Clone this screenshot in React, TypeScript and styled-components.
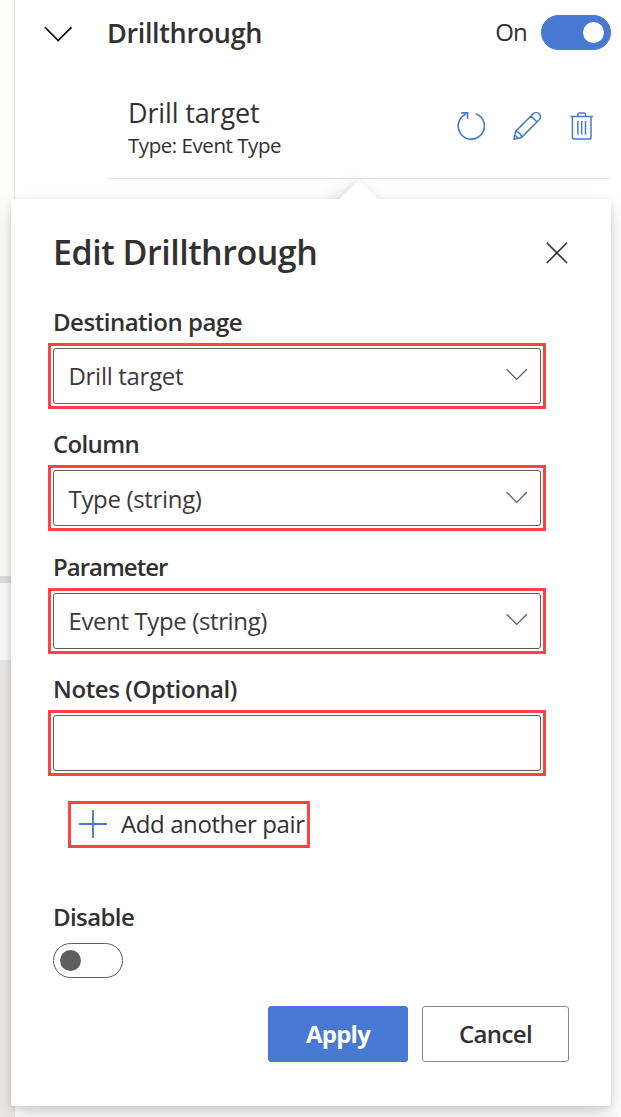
import React from "react";
import styled, { createGlobalStyle } from "styled-components";

const BLUE = "#4878d2";
const RED = "#ff4343";
const INK = "#323130";

const GlobalStyle = createGlobalStyle`
  *, *::before, *::after { box-sizing: border-box; }
  body {
    margin: 0;
    background: #fff;
    color: ${INK};
    font-family: "Open Sans", "Noto Sans", sans-serif;
    overflow: hidden;
  }
  button { font: inherit; color: inherit; }
  svg { display: block; flex: none; }
`;

const Page = styled.div`
  position: relative;
  display: flex;
  width: 621px;
  height: 1117px;
  overflow: hidden;
`;

const Rail = styled.div`
  display: flex;
  flex-direction: column;
  flex: none;
  width: 15px;
  border-right: 1px solid #e6e6e6;
`;

const RailPart = styled.div<{ $height?: number; $color: string }>`
  flex: ${(p) => (p.$height ? `0 0 ${p.$height}px` : "1")};
  background: ${(p) => p.$color};
`;

const Pane = styled.main`
  flex: 1;
  padding: 15px 10px 0 29px;
  background: #fff;
`;

const PaneHeader = styled.header`
  display: flex;
  align-items: center;
  height: 35px;
`;

const Label = styled.span<{
  $size: number;
  $line: number;
  $weight?: number;
  $track?: number;
  $color?: string;
}>`
  display: block;
  white-space: nowrap;
  font-size: ${(p) => p.$size}px;
  line-height: ${(p) => p.$line}px;
  font-weight: ${(p) => p.$weight ?? 400};
  letter-spacing: ${(p) => p.$track ?? 0}px;
  color: ${(p) => p.$color ?? INK};
`;

const HeaderTitle = styled.div`
  flex: 1;
  padding-left: 35px;
`;

const Toggle = styled.button<{ $on?: boolean }>`
  display: flex;
  align-items: center;
  justify-content: ${(p) => (p.$on ? "flex-end" : "flex-start")};
  width: 70px;
  height: 35px;
  padding: 0 6px;
  border: 1px solid ${(p) => (p.$on ? BLUE : "#605e5c")};
  border-radius: 18px;
  background: ${(p) => (p.$on ? BLUE : "#fff")};
`;

const Knob = styled.span<{ $color: string }>`
  width: 21px;
  height: 21px;
  border-radius: 50%;
  background: ${(p) => p.$color};
`;

const OnGroup = styled.div`
  display: flex;
  align-items: flex-start;
  gap: 14px;
`;

const TargetRow = styled.section`
  display: flex;
  justify-content: space-between;
  height: 84px;
  margin: 45px 0 0 63px;
  padding: 0 14px 0 21px;
  border-bottom: 1px solid #e8e8e8;
`;

const Actions = styled.div`
  display: flex;
  align-items: flex-start;
  gap: 28px;
  padding-top: 17px;
`;

const Callout = styled.div`
  position: absolute;
  left: 11px;
  top: 199px;
  width: 600px;
  height: 907px;
`;

const Beak = styled.div`
  position: absolute;
  left: 334px;
  top: -14px;
  width: 28px;
  height: 28px;
  background: #fff;
  transform: rotate(45deg);
  box-shadow: 0 11px 25px rgba(0, 0, 0, 0.14), 0 2px 6px rgba(0, 0, 0, 0.11);
`;

const Card = styled.div`
  position: relative;
  display: flex;
  flex-direction: column;
  height: 100%;
  padding: 28px 42px 44px 42px;
  border-radius: 3px;
  background: #fff;
`;

const CardShadow = styled.div`
  position: absolute;
  inset: 0;
  border-radius: 3px;
  box-shadow: 0 11px 25px rgba(0, 0, 0, 0.14), 0 2px 6px rgba(0, 0, 0, 0.11);
`;

const CardHeader = styled.div`
  display: flex;
  align-items: center;
  justify-content: space-between;
  height: 50px;
  padding-right: 1px;

  svg { margin-top: 2px; }
`;

const Fields = styled.div`
  display: flex;
  flex-direction: column;
  gap: 19.5px;
  padding-top: 28.7px;
`;

const Highlight = styled.div`
  width: 498px;
  height: 66px;
  margin: 5px 0 0 -5px;
  padding: 2px;
  border: 3px solid ${RED};
`;

const Box = styled.div`
  display: flex;
  align-items: center;
  justify-content: space-between;
  height: 56px;
  padding: 0.8px 12px 0 14.5px;
  border: 1px solid #605e5c;
  border-radius: 3px;
`;

const AddPair = styled.button`
  display: flex;
  align-items: center;
  gap: 14px;
  width: 242px;
  height: 47px;
  margin: 24.8px 0 0 15px;
  padding: 0 0 0 8px;
  border: 3px solid ${RED};
  background: #fff;
`;

const DisableGroup = styled.div`
  display: flex;
  flex-direction: column;
  gap: 10px;
  padding-top: 53px;
`;

const Footer = styled.div`
  display: flex;
  justify-content: flex-end;
  gap: 14px;
  margin-top: auto;
`;

const Button = styled.button<{ $primary?: boolean }>`
  display: flex;
  align-items: center;
  justify-content: center;
  width: ${(p) => (p.$primary ? 140 : 147)}px;
  height: 56px;
  padding: 0;
  border: 1px solid ${(p) => (p.$primary ? BLUE : "#8a8886")};
  border-radius: 3px;
  background: ${(p) => (p.$primary ? BLUE : "#fff")};
`;

const SectionChevron = () => (
  <svg width="28" height="28" viewBox="0 0 28 28" fill="none" stroke="#111" strokeWidth="1.7">
    <path d="M0.9 8.2 14.2 21.5 27.5 8.2" />
  </svg>
);

const SelectChevron = () => (
  <svg width="22" height="22" viewBox="0 0 22 22" fill="none" stroke="#605e5c" strokeWidth="1.3">
    <path d="M0.6 4.2 10.7 14.4 20.8 4.2" />
  </svg>
);

const CloseIcon = () => (
  <svg width="22" height="22" viewBox="0 0 22 22" fill="none" stroke={INK} strokeWidth="1.6">
    <path d="M0.8 0.8 21 21M21 0.8 0.8 21" />
  </svg>
);

const PlusIcon = () => (
  <svg width="28" height="28" viewBox="0 0 28 28" fill="none" stroke={BLUE} strokeWidth="1.8">
    <path d="M0 14H28M14 0V28" />
  </svg>
);

const RefreshIcon = () => (
  <svg width="28" height="28" viewBox="-0.7 0 28 28" fill="none" stroke={BLUE} strokeWidth="1.6">
    <path d="M18 1.7A13.1 13.1 0 1 1 8.2 2.1M3.6 0.9H9.9V7" />
  </svg>
);

const PencilIcon = () => (
  <svg width="28" height="28" viewBox="0 0 28 28" fill="none" stroke={BLUE} strokeWidth="1.5" strokeLinejoin="round">
    <path d="M0.8 27.2 2.6 19.4 20.2 1.8A3.9 3.9 0 0 1 26.2 7.8L8.6 25.4ZM18 4 24 10M2.6 19.4C5.4 19.6 8.4 22.4 8.6 25.4M1.7 23.6C3 23.8 4.3 25.2 4.5 26.4" />
  </svg>
);

const TrashIcon = () => (
  <svg width="28" height="28" viewBox="0 0 28 28" fill="none" stroke={BLUE} strokeWidth="1.5">
    <path d="M1.4 4.5H24M8.9 4.5V2.3Q8.9 0.9 10.3 0.9H15.1Q16.5 0.9 16.5 2.3V4.5M3.4 4.5V25.3Q3.4 27.1 5.2 27.1H20.2Q22 27.1 22 25.3V4.5M8.9 9V22.6M12.7 9V22.6M16.5 9V22.6" />
  </svg>
);

type FieldData = { label: string; labelTrack: number; value?: string; valueTrack?: number };

const FIELDS: FieldData[] = [
  { label: "Destination page", labelTrack: -0.48, value: "Drill target", valueTrack: -0.3 },
  { label: "Column", labelTrack: -0.65, value: "Type (string)", valueTrack: -0.33 },
  { label: "Parameter", labelTrack: -1, value: "Event Type (string)", valueTrack: -0.38 },
  { label: "Notes (Optional)", labelTrack: -0.4 },
];

const Field = ({ label, labelTrack, value, valueTrack }: FieldData) => (
  <div>
    <Label $size={24} $line={32} $weight={600} $track={labelTrack}>{label}</Label>
    <Highlight>
      <Box>
        {value && (
          <>
            <Label $size={24} $line={54} $track={valueTrack} $color="#3b3a39">{value}</Label>
            <SelectChevron />
          </>
        )}
      </Box>
    </Highlight>
  </div>
);

export default function App() {
  return (
    <>
      <GlobalStyle />
      <Page>
        <Rail>
          <RailPart $height={576} $color="#fdfdfb" />
          <RailPart $height={7} $color="#e1dfdd" />
          <RailPart $height={77} $color="#fbfbfb" />
          <RailPart $color="#edebe9" />
        </Rail>
        <Pane>
          <PaneHeader>
            <SectionChevron />
            <HeaderTitle>
              <Label $size={27} $line={35} $weight={600} $track={-0.35}>Drillthrough</Label>
            </HeaderTitle>
            <OnGroup>
              <Label $size={24} $line={33} $track={-0.8}>On</Label>
              <Toggle $on aria-label="Drillthrough">
                <Knob $color="#fff" />
              </Toggle>
            </OnGroup>
          </PaneHeader>
          <TargetRow>
            <div>
              <Label $size={27} $line={36} $track={-0.15}>Drill target</Label>
              <Label $size={20.5} $line={28} $track={-0.45}>Type: Event Type</Label>
            </div>
            <Actions>
              <RefreshIcon />
              <PencilIcon />
              <TrashIcon />
            </Actions>
          </TargetRow>
        </Pane>

        <Callout>
          <CardShadow />
          <Beak />
          <Card>
            <CardHeader>
              <Label $size={34} $line={50} $weight={600} $track={-0.48}>Edit Drillthrough</Label>
              <CloseIcon />
            </CardHeader>
            <Fields>
              {FIELDS.map((f) => (
                <Field key={f.label} {...f} />
              ))}
            </Fields>
            <AddPair>
              <PlusIcon />
              <Label $size={24} $line={40} $track={-0.4}>Add another pair</Label>
            </AddPair>
            <DisableGroup>
              <Label $size={24} $line={32} $weight={600} $track={-0.6}>Disable</Label>
              <Toggle aria-label="Disable">
                <Knob $color="#605e5c" />
              </Toggle>
            </DisableGroup>
            <Footer>
              <Button $primary>
                <Label $size={24} $line={40} $weight={700} $track={-0.75} $color="#fff">Apply</Label>
              </Button>
              <Button>
                <Label $size={24} $line={40} $weight={600} $track={-0.6}>Cancel</Label>
              </Button>
            </Footer>
          </Card>
        </Callout>
      </Page>
    </>
  );
}
